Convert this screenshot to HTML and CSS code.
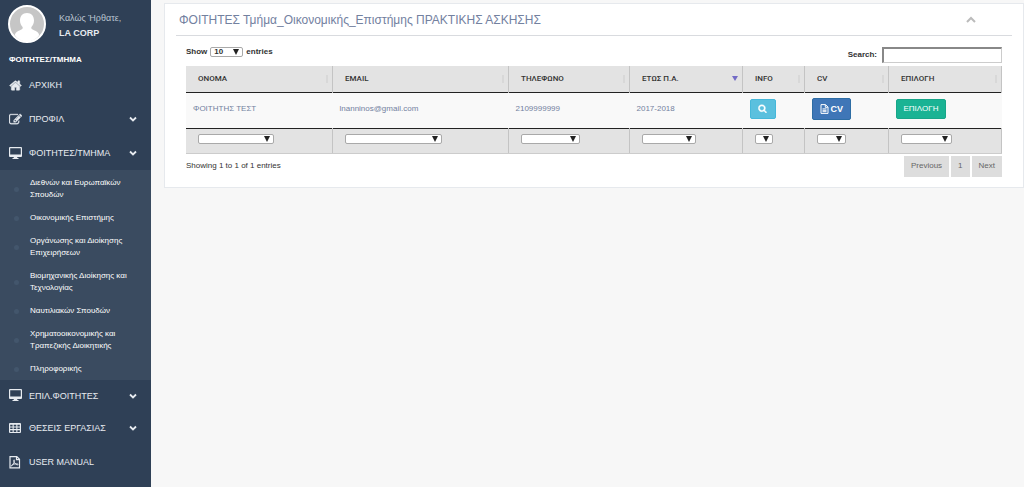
FILE: index.html
```html
<!DOCTYPE html>
<html lang="el">
<head>
<meta charset="utf-8">
<meta name="viewport" content="width=device-width, initial-scale=1">
<title>ΦΟΙΤΗΤΕΣ/ΤΜΗΜΑ</title>
<link rel="stylesheet" href="styles.css">
</head>
<body>
<div class="layout">
  <aside class="sidebar">
    <div class="profile">
      <svg class="avatar" viewBox="0 0 38 38" aria-hidden="true">
        <circle cx="19" cy="19" r="18" fill="#c6c6c6" stroke="#fff" stroke-width="2"/>
        <path d="M19 8c-4.500 0-7 3-7 7.500 0 3 1.200 5 2.600 6.600.6 1.600-.6 2.400-2.600 3.200-2.600 1-4.600 2.200-5.200 4.700C9.500 34 14 36.500 19 36.500S28.500 34 31.200 30c-.6-2.500-2.600-3.700-5.200-4.700-2-.8-3.200-1.600-2.600-3.200C24.800 20.500 26 18.500 26 15.500 26 11 23.500 8 19 8z" fill="#fff"/>
      </svg>
      <div class="who">
        <span class="welcome">Καλώς Ήρθατε,</span>
        <strong class="company">LA CORP</strong>
      </div>
    </div>
    <h3 class="section">ΦΟΙΤΗΤΕΣ/ΤΜΗΜΑ</h3>
    <nav>
      <a class="item" href="#home">
        <svg class="icon" viewBox="0 0 1792 1792" aria-hidden="true"><path fill="currentColor" stroke="currentColor" stroke-width="70" d="M1472 992v480q0 26-19 45t-45 19h-384v-384h-256v384h-384q-26 0-45-19t-19-45v-480q0-1 .5-3t.5-3l575-474 575 474q1 2 1 6zm223-69l-62 74q-8 9-21 11h-3q-13 0-21-7l-692-577-692 577q-12 8-24 7-13-2-21-11l-62-74q-8-10-7-23.500t11-21.500l719-599q32-26 76-26t76 26l244 204v-195q0-14 9-23t23-9h192q14 0 23 9t9 23v408l219 182q10 8 11 21.500t-7 23.500z"/></svg>
        <span class="label">ΑΡΧΙΚΗ</span>
      </a>
      <a class="item" href="#profile">
        <svg class="icon" viewBox="0 0 1792 1792" aria-hidden="true"><path fill="currentColor" stroke="currentColor" stroke-width="40" d="M888 1184l116-116-152-152-116 116v56h96v96h56zm440-720q-16-16-33 1l-350 350q-17 17-1 33t33-1l350-350q17-17 1-33zm80 594v190q0 119-84.500 203.500t-203.500 84.500h-832q-119 0-203.500-84.500t-84.500-203.500v-832q0-119 84.500-203.500t203.500-84.500h832q63 0 117 25 15 7 18 23 3 17-9 29l-49 49q-14 14-32 8-23-6-45-6h-832q-66 0-113 47t-47 113v832q0 66 47 113t113 47h832q66 0 113-47t47-113v-126q0-13 9-22l64-64q15-15 35-7t20 29zm-96-738l288 288-672 672h-288v-288zm444 132l-92 92-288-288 92-92q28-28 68-28t68 28l152 152q28 28 28 68t-28 68z"/></svg>
        <span class="label">ΠΡΟΦΙΛ</span>
        <svg class="chevron" viewBox="0 0 8 8" aria-hidden="true"><path d="M1 2.500l3 3 3-3" fill="none" stroke="currentColor" stroke-width="1.800"/></svg>
      </a>
      <a class="item" href="#students">
        <svg class="icon" viewBox="0 0 13 13" aria-hidden="true"><path fill="currentColor" fill-rule="evenodd" d="M1 0h11q1 0 1 1v8q0 1-1 1H8l.5 1h1v1h-6v-1h1L5 10H1Q0 10 0 9V1Q0 0 1 0zm.2 1.200v6.300h10.600v-6.300z"/></svg>
        <span class="label">ΦΟΙΤΗΤΕΣ/ΤΜΗΜΑ</span>
        <svg class="chevron" viewBox="0 0 8 8" aria-hidden="true"><path d="M1 2.500l3 3 3-3" fill="none" stroke="currentColor" stroke-width="1.800"/></svg>
      </a>
      <ul class="submenu">
        <li><a href="#d1">Διεθνών και Ευρωπαϊκών Σπουδών</a></li>
        <li><a href="#d2">Οικονομικής Επιστήμης</a></li>
        <li><a href="#d3">Οργάνωσης και Διοίκησης Επιχειρήσεων</a></li>
        <li><a href="#d4">Βιομηχανικής Διοίκησης και Τεχνολογίας</a></li>
        <li><a href="#d5">Ναυτιλιακών Σπουδών</a></li>
        <li><a href="#d6">Χρηματοοικονομικής και Τραπεζικής Διοικητικής</a></li>
        <li><a href="#d7">Πληροφορικής</a></li>
      </ul>
      <a class="item" href="#selected">
        <svg class="icon" viewBox="0 0 13 13" aria-hidden="true"><path fill="currentColor" fill-rule="evenodd" d="M1 0h11q1 0 1 1v8q0 1-1 1H8l.5 1h1v1h-6v-1h1L5 10H1Q0 10 0 9V1Q0 0 1 0zm.2 1.200v6.300h10.600v-6.300z"/></svg>
        <span class="label">ΕΠΙΛ.ΦΟΙΤΗΤΕΣ</span>
        <svg class="chevron" viewBox="0 0 8 8" aria-hidden="true"><path d="M1 2.500l3 3 3-3" fill="none" stroke="currentColor" stroke-width="1.800"/></svg>
      </a>
      <a class="item" href="#jobs">
        <svg class="icon" viewBox="0 0 13 13" aria-hidden="true"><path fill="currentColor" fill-rule="evenodd" d="M1 1h10q1 0 1 1v8q0 1-1 1H1q-1 0-1-1V2q0-1 1-1zm.2 1.700v1.800h2.400V2.700zm3.500 0v1.800h2.600V2.700zm3.700 0v1.800h2.400V2.700zM1.200 5.500v1.600h2.400V5.500zm3.500 0v1.600h2.600V5.500zm3.700 0v1.600h2.400V5.500zM1.200 8.200v1.700h2.400V8.200zm3.500 0v1.700h2.600V8.200zm3.700 0v1.700h2.400V8.200z"/></svg>
        <span class="label">ΘΕΣΕΙΣ ΕΡΓΑΣΙΑΣ</span>
        <svg class="chevron" viewBox="0 0 8 8" aria-hidden="true"><path d="M1 2.500l3 3 3-3" fill="none" stroke="currentColor" stroke-width="1.800"/></svg>
      </a>
      <a class="item" href="#manual">
        <svg class="icon" viewBox="0 0 13 13" aria-hidden="true"><g fill="none" stroke="currentColor" stroke-width="1.200"><path d="M1 .6h6.800l2.700 2.700v8.600H1zM7.500.8v2.900h2.800"/><path stroke-width=".9" d="M5.100 3.800c-.8.200-.2 1.800.5 3.100.8 1.300 2.200 2 3.200 1.900.9-.2.200-1-1.200-1-2 0-4 .5-4.900 1.300-.9.900-.2 1.400.5.500C4.200 8.300 6.200 4.200 5.100 3.800z"/></g></svg>
        <span class="label">USER MANUAL</span>
      </a>
    </nav>
  </aside>
  <main class="content">
    <section class="panel">
      <header class="panel-head">
        <h2 class="title">ΦΟΙΤΗΤΕΣ Τμήμα_Οικονομικής_Επιστήμης ΠΡΑΚΤΙΚΗΣ ΑΣΚΗΣΗΣ</h2>
        <button class="collapse" type="button" aria-label="Collapse"><svg viewBox="0 0 10 8" aria-hidden="true"><path d="M1 6l4-4 4 4" fill="none" stroke="currentColor" stroke-width="2"/></svg></button>
      </header>
      <div class="panel-body">
        <div class="controls">
          <div class="length">
            <label for="length">Show</label>
            <span class="pick"><select id="length"><option>10</option><option>25</option></select></span>
            <span>entries</span>
          </div>
          <div class="search">
            <label for="search">Search:</label>
            <input id="search" type="search">
          </div>
        </div>
        <table class="grid">
          <colgroup><col><col class="c-email"><col class="c-phone"><col class="c-year"><col class="c-info"><col class="c-cv"><col class="c-pick"></colgroup>
          <thead>
            <tr>
              <th scope="col"><div class="head">ΟΝΟΜΑ<i class="sort"></i></div></th>
              <th scope="col"><div class="head">EMAIL<i class="sort"></i></div></th>
              <th scope="col"><div class="head">ΤΗΛΕΦΩΝΟ<i class="sort"></i></div></th>
              <th scope="col" aria-sort="descending"><div class="head">ΕΤΩΣ Π.Α.<i class="sort desc"></i></div></th>
              <th scope="col"><div class="head">INFO<i class="sort"></i></div></th>
              <th scope="col"><div class="head">CV<i class="sort"></i></div></th>
              <th scope="col"><div class="head">ΕΠΙΛΟΓΗ<i class="sort"></i></div></th>
            </tr>
          </thead>
          <tbody>
            <tr>
              <td>ΦΟΙΤΗΤΗΣ ΤΕΣΤ</td>
              <td>lnanninos@gmail.com</td>
              <td>2109999999</td>
              <td>2017-2018</td>
              <td><button class="btn info" type="button" aria-label="Info"><svg viewBox="0 0 1792 1792" aria-hidden="true"><path fill="currentColor" stroke="currentColor" stroke-width="80" d="M1216 832q0-185-131.500-316.500t-316.500-131.500-316.500 131.500-131.500 316.500 131.500 316.500 316.500 131.500 316.500-131.500 131.500-316.500zm512 832q0 52-38 90t-90 38q-54 0-90-38l-343-342q-179 124-399 124-143 0-273.500-55.500t-225-150-150-225-55.500-273.500 55.500-273.500 150-225 225-150 273.500-55.500 273.500 55.500 225 150 150 225 55.500 273.500q0 220-124 399l343 343q37 37 37 90z"/></svg></button></td>
              <td><button class="btn cv" type="button"><svg viewBox="0 0 9 10" aria-hidden="true"><path d="M1 .6h4.500L8 3.100v6.300H1zM5.300.8v2.500h2.500M2.500 4.900h4M2.500 6.300h4M2.500 7.700h4" fill="none" stroke="currentColor"/></svg>CV</button></td>
              <td><button class="btn choose" type="button">ΕΠΙΛΟΓΗ</button></td>
            </tr>
          </tbody>
          <tfoot>
            <tr>
              <td><span class="pick w-name"><select aria-label="ΟΝΟΜΑ"><option></option></select></span></td>
              <td><span class="pick w-email"><select aria-label="EMAIL"><option></option></select></span></td>
              <td><span class="pick w-phone"><select aria-label="ΤΗΛΕΦΩΝΟ"><option></option></select></span></td>
              <td><span class="pick w-year"><select aria-label="ΕΤΩΣ Π.Α."><option></option></select></span></td>
              <td><span class="pick w-info"><select aria-label="INFO"><option></option></select></span></td>
              <td><span class="pick w-cv"><select aria-label="CV"><option></option></select></span></td>
              <td><span class="pick w-choose"><select aria-label="ΕΠΙΛΟΓΗ"><option></option></select></span></td>
            </tr>
          </tfoot>
        </table>
        <div class="below">
          <p class="summary">Showing 1 to 1 of 1 entries</p>
          <div class="pager"><button type="button">Previous</button><button type="button">1</button><button type="button">Next</button></div>
        </div>
      </div>
    </section>
  </main>
</div>
</body>
</html>
```
FILE: styles.css
```css
* { box-sizing: border-box; }

body {
  margin: 0;
  background: #f7f7f7;
  color: #333;
  font: 8px/12px "Liberation Sans", Arial, sans-serif;
}

button, input, select { font: inherit; color: inherit; margin: 0; }
a { color: inherit; text-decoration: none; }

.layout { display: flex; min-height: 100vh; }

/* Sidebar */
.sidebar {
  flex: 0 0 151px;
  background: #2f4056;
  color: #e7ebf0;
}

.profile { display: flex; gap: 13px; padding: 5px 8px 0; }
.avatar { width: 38px; height: 38px; }
.who { display: flex; flex-direction: column; gap: 3px; padding-top: 7px; }
.welcome { color: #bac4d0; font-size: 9px; }
.company { font-size: 9px; }

.section {
  margin: 11px 0 2px;
  padding-left: 9px;
  color: #fff;
  font-size: 8px;
  line-height: 12px;
}

.item {
  display: flex;
  align-items: center;
  height: 34px;
  padding: 0 14px 0 9px;
  font-size: 9px;
}
.icon { width: 13px; height: 13px; margin-right: 7px; }
.label { flex: 1; }
.chevron { width: 8px; height: 8px; }

.submenu {
  margin: 0;
  padding: 1px 0 0;
  list-style: none;
  background: #3a4b60;
  color: #fff;
}
.submenu li {
  display: flex;
  align-items: center;
  padding: 6px 16px 5px 14px;
}
.submenu li::before {
  content: "";
  flex: none;
  width: 5px;
  height: 5px;
  margin-right: 11px;
  border-radius: 50%;
  background: #43566c;
}
.submenu + .item { height: 31px; }

/* Panel */
.content { flex: 1; min-width: 0; padding: 3px 0 0 13px; }
.panel {
  padding: 0 11px 10px;
  border: 1px solid #e6e9ed;
  background: #fff;
}
.panel-head {
  display: flex;
  align-items: center;
  justify-content: space-between;
  height: 32px;
  padding: 0 36px 0 3px;
  border-bottom: 1px solid #d9dbdf;
}
.title { margin: 0; color: #73819f; font-size: 12px; font-weight: 400; line-height: 16px; }
.collapse { display: flex; padding: 0; border: 0; background: none; color: #bbb; }
.collapse svg { width: 10px; height: 8px; }
.panel-body { padding: 10px 10px 0; }

.controls { display: flex; justify-content: space-between; font-weight: 700; }
.length { display: flex; align-items: center; gap: 3px; height: 12px; }
.search { display: flex; align-items: center; gap: 5px; height: 17px; }
.search input {
  width: 120px;
  height: 16px;
  padding: 0 3px;
  border: 1px solid #ccc;
  border-top: 2px solid #888;
  border-left: 2px solid #888;
  background: #fff;
  appearance: none;
}

.pick { display: flex; position: relative; width: 33px; height: 10px; }
.pick select {
  width: 100%;
  height: 100%;
  padding: 0 3px;
  border: 1px solid #a9a9a9;
  border-radius: 2px;
  background: #fff;
  line-height: 8px;
  appearance: none;
}
.pick::after {
  content: "";
  position: absolute;
  top: 2px;
  right: 4px;
  border: 3px solid transparent;
  border-top: 6px solid #222;
  border-bottom: 0;
  pointer-events: none;
}
.w-name { width: 76px; }
.w-email { width: 97px; }
.w-phone { width: 59px; }
.w-year { width: 54px; }
.w-info { width: 18px; }
.w-cv { width: 29px; }
.w-choose { width: 51px; }

/* Student table */
.grid { width: 100%; margin-top: 3px; table-layout: fixed; border-collapse: collapse; }
.c-email { width: 176px; }
.c-phone { width: 121px; }
.c-year { width: 113px; }
.c-info { width: 62px; }
.c-cv { width: 84px; }
.c-pick { width: 113px; }
.grid th, .grid tfoot td {
  height: 26px;
  padding: 0 4px 0 12px;
  border-right: 1px solid #c4c4c4;
  background: #e3e3e3;
  text-align: left;
}
.grid th { font: 500 8px/12px Roboto, sans-serif; }
.grid tfoot td { height: 25px; padding-bottom: 3px; border-bottom: 1px solid #ccc; }
.grid thead tr { border-bottom: 1px solid #222; }
.grid tbody tr { border-bottom: 1px solid #222; background: #f9f9f9; }
.grid tbody td { height: 36px; padding: 0 0 3px 7px; color: #73819f; }
.head { display: flex; align-items: center; justify-content: space-between; }
.sort { width: 2px; height: 8px; background: #d8d8d8; }
.sort.desc {
  width: 6px;
  height: 5px;
  border: 3px solid transparent;
  border-top: 5px solid #736bc6;
  border-bottom: 0;
  background: none;
}

.btn {
  display: flex;
  align-items: center;
  justify-content: center;
  gap: 2px;
  height: 20px;
  padding: 0 7px;
  border: 1px solid;
  border-radius: 2px;
  color: #fff;
}
.grid .info { width: 26px; border-color: #46b8da; background: #5bc0de; }
.info svg { flex: none; width: 9px; height: 9px; }
.cv { height: 22px; border-color: #2e6da4; background: #3f76b7; font-size: 9px; font-weight: 700; }
.cv svg { width: 9px; height: 10px; }
.choose { border-color: #18a689; background: #1ab394; }

.below { display: flex; justify-content: space-between; padding-top: 2px; }
.summary { margin: 0; padding-top: 4px; }
.pager { display: flex; gap: 2px; }
.pager button { height: 21px; padding: 0 7px; border: 0; background: #ddd; color: #666; }
```
